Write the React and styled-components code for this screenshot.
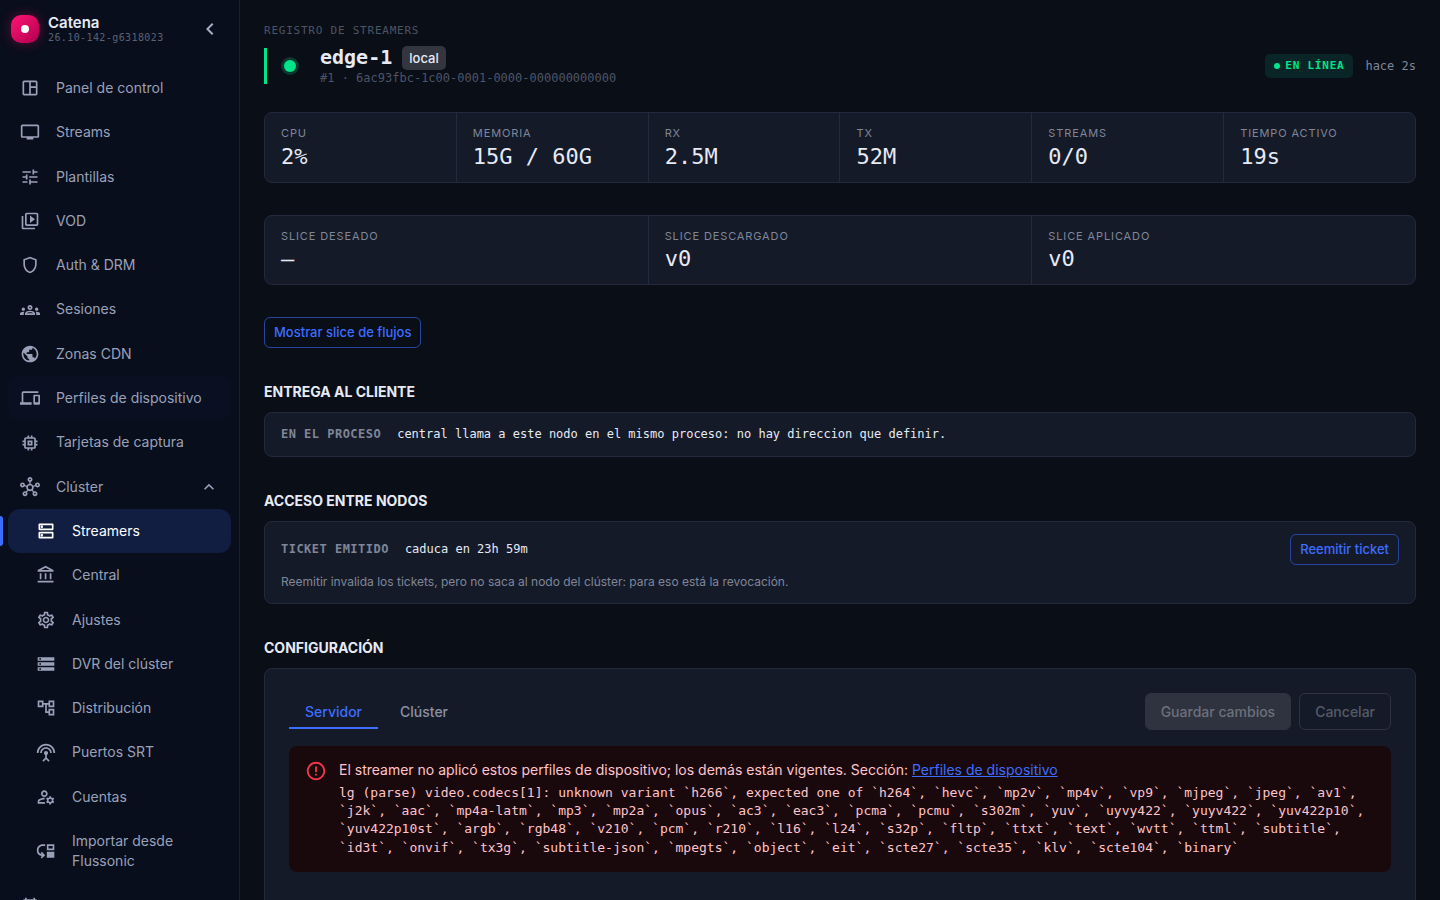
import { useState } from "react";
import styled, { createGlobalStyle, css } from "styled-components";
import {
    MdChevronLeft,
    MdErrorOutline,
    MdExpandLess,
    MdMemory,
    MdMoveDown,
    MdOutlineAccountBalance,
    MdOutlineAccountTree,
    MdOutlineCalendarMonth,
    MdOutlineDevices,
    MdOutlineDns,
    MdOutlineGroups,
    MdOutlineHub,
    MdOutlineManageAccounts,
    MdOutlineSettings,
    MdOutlineShield,
    MdOutlineSpaceDashboard,
    MdOutlineVideoLibrary,
    MdPublic,
    MdSettingsInputAntenna,
    MdStorage,
    MdTune,
    MdTv,
} from "react-icons/md";

const sans = `Inter, "Liberation Sans", sans-serif`;
const mono = `"DejaVu Sans Mono", "Liberation Mono", monospace`;

const mainLinks = [
    { label: "Panel de control", icon: MdOutlineSpaceDashboard },
    { label: "Streams", icon: MdTv },
    { label: "Plantillas", icon: MdTune },
    { label: "VOD", icon: MdOutlineVideoLibrary },
    { label: "Auth & DRM", icon: MdOutlineShield },
    { label: "Sesiones", icon: MdOutlineGroups },
    { label: "Zonas CDN", icon: MdPublic },
    { label: "Perfiles de dispositivo", icon: MdOutlineDevices, hovered: true },
    { label: "Tarjetas de captura", icon: MdMemory },
];

const clusterLinks = [
    { label: "Streamers", icon: MdOutlineDns, active: true },
    { label: "Central", icon: MdOutlineAccountBalance },
    { label: "Ajustes", icon: MdOutlineSettings },
    { label: "DVR del clúster", icon: MdStorage },
    { label: "Distribución", icon: MdOutlineAccountTree },
    { label: "Puertos SRT", icon: MdSettingsInputAntenna },
    { label: "Cuentas", icon: MdOutlineManageAccounts },
    { label: "Importar desde Flussonic", icon: MdMoveDown },
];

const metrics = [
    ["CPU", "2%"],
    ["Memoria", "15G / 60G"],
    ["RX", "2.5M"],
    ["TX", "52M"],
    ["Streams", "0/0"],
    ["Tiempo activo", "19s"],
];

const slices = [
    ["Slice deseado", "—"],
    ["Slice descargado", "v0"],
    ["Slice aplicado", "v0"],
];

const codecError =
    "lg (parse) video.codecs[1]: unknown variant `h266`, expected one of `h264`, `hevc`, `mp2v`, `mp4v`, `vp9`, `mjpeg`, `jpeg`, `av1`, `j2k`, `aac`, `mp4a-latm`, `mp3`, `mp2a`, `opus`, `ac3`, `eac3`, `pcma`, `pcmu`, `s302m`, `yuv`, `uyvy422`, `yuyv422`, `yuv422p10`, `yuv422p10st`, `argb`, `rgb48`, `v210`, `pcm`, `r210`, `l16`, `l24`, `s32p`, `fltp`, `ttxt`, `text`, `wvtt`, `ttml`, `subtitle`, `id3t`, `onvif`, `tx3g`, `subtitle-json`, `mpegts`, `object`, `eit`, `scte27`, `scte35`, `klv`, `scte104`, `binary`";

function NavItem({ label, icon: Icon, nested, active, hovered }) {
    return (
        <NavLink
            href="#"
            $nested={nested}
            $active={active}
            $hovered={hovered}
            aria-current={active ? "page" : undefined}
        >
            <Icon size={20} />
            <span>{label}</span>
        </NavLink>
    );
}

function StatStrip({ items }) {
    return (
        <Strip $columns={items.length}>
            {items.map(([label, value]) => (
                <Stat key={label}>
                    <StatLabel>{label}</StatLabel>
                    <StatValue>{value}</StatValue>
                </Stat>
            ))}
        </Strip>
    );
}

export default function App() {
    const [clusterOpen, setClusterOpen] = useState(true);
    const [tab, setTab] = useState("Servidor");

    return (
        <>
            <GlobalStyle />
            <Layout>
                <Sidebar>
                    <Brand>
                        <Logo />
                        <BrandText>
                            <BrandName>Catena</BrandName>
                            <Version>26.10-142-g6318023</Version>
                        </BrandText>
                        <IconButton aria-label="Contraer menú">
                            <MdChevronLeft size={24} />
                        </IconButton>
                    </Brand>
                    <Nav>
                        {mainLinks.map((link) => (
                            <NavItem key={link.label} {...link} />
                        ))}
                        <NavToggle
                            aria-expanded={clusterOpen}
                            onClick={() => setClusterOpen(!clusterOpen)}
                        >
                            <MdOutlineHub size={20} />
                            <span>Clúster</span>
                            <MdExpandLess size={20} />
                        </NavToggle>
                        {clusterOpen &&
                            clusterLinks.map((link) => (
                                <NavItem key={link.label} nested {...link} />
                            ))}
                        <NavItem
                            label="Próxima emisión"
                            icon={MdOutlineCalendarMonth}
                        />
                    </Nav>
                </Sidebar>

                <Main>
                    <Kicker>Registro de streamers</Kicker>
                    <Header>
                        <Accent />
                        <StatusDot />
                        <Identity>
                            <TitleRow>
                                <Title>edge-1</Title>
                                <Badge>local</Badge>
                            </TitleRow>
                            <NodeId>
                                #1 · 6ac93fbc-1c00-0001-0000-000000000000
                            </NodeId>
                        </Identity>
                        <OnlinePill>En línea</OnlinePill>
                        <LastSeen>hace 2s</LastSeen>
                    </Header>

                    <StatStrip items={metrics} />
                    <StatStrip items={slices} />

                    <OutlineButton>Mostrar slice de flujos</OutlineButton>

                    <Section>
                        <SectionTitle>Entrega al cliente</SectionTitle>
                        <Card>
                            <CardRow>
                                <State>En el proceso</State>
                                <Detail>
                                    central llama a este nodo en el mismo
                                    proceso: no hay direccion que definir.
                                </Detail>
                            </CardRow>
                        </Card>
                    </Section>

                    <Section>
                        <SectionTitle>Acceso entre nodos</SectionTitle>
                        <Card>
                            <CardRow>
                                <State>Ticket emitido</State>
                                <Detail>caduca en 23h 59m</Detail>
                                <OutlineButton>Reemitir ticket</OutlineButton>
                            </CardRow>
                            <Note>
                                Reemitir invalida los tickets, pero no saca al
                                nodo del clúster: para eso está la revocación.
                            </Note>
                        </Card>
                    </Section>

                    <Section>
                        <SectionTitle>Configuración</SectionTitle>
                        <Card $roomy>
                            <Toolbar>
                                <Tabs role="tablist">
                                    {["Servidor", "Clúster"].map((name) => (
                                        <Tab
                                            key={name}
                                            role="tab"
                                            aria-selected={tab === name}
                                            $active={tab === name}
                                            onClick={() => setTab(name)}
                                        >
                                            {name}
                                        </Tab>
                                    ))}
                                </Tabs>
                                <FormButton $filled disabled>
                                    Guardar cambios
                                </FormButton>
                                <FormButton disabled>Cancelar</FormButton>
                            </Toolbar>
                            <Alert role="alert">
                                <MdErrorOutline size={22} />
                                <div>
                                    <AlertText>
                                        El streamer no aplicó estos perfiles de
                                        dispositivo; los demás están vigentes.
                                        Sección:{" "}
                                        <a href="#">Perfiles de dispositivo</a>
                                    </AlertText>
                                    <AlertCode>{codecError}</AlertCode>
                                </div>
                            </Alert>
                        </Card>
                    </Section>
                </Main>
            </Layout>
        </>
    );
}

const GlobalStyle = createGlobalStyle`
    * {
        box-sizing: border-box;
    }
    body {
        margin: 0;
        background-color: #0a0e17;
        color: #e6eaf5;
        font-family: ${sans};
        font-size: 14px;
    }
    button {
        font-family: inherit;
        cursor: pointer;
    }
`;

const Layout = styled.div`
    display: flex;
    height: 100vh;
    overflow: hidden;
`;

const Sidebar = styled.aside`
    flex: 0 0 240px;
    overflow: hidden;
    background-color: #090e1c;
    border-right: 1px solid #1a2030;
`;
const Brand = styled.div`
    display: flex;
    align-items: center;
    height: 58px;
    padding: 0 17px 0 11px;
    margin-bottom: 8px;
`;
const Logo = styled.div`
    display: flex;
    align-items: center;
    justify-content: center;
    width: 28px;
    height: 28px;
    border-radius: 10px;
    background-image: linear-gradient(135deg, #ff1475, #b0004e);
    box-shadow: 0 0 12px rgba(255, 15, 110, 0.35);

    &::before {
        content: "";
        width: 8px;
        height: 8px;
        border-radius: 50%;
        background-color: #ffffff;
    }
`;
const BrandText = styled.div`
    flex: 1;
    display: flex;
    flex-direction: column;
    margin-left: 9px;
`;
const BrandName = styled.span`
    font-size: 15px;
    font-weight: 600;
    line-height: 18px;
`;
const Version = styled.span`
    font-family: ${mono};
    font-size: 10px;
    line-height: 12px;
    letter-spacing: 0.04em;
    color: #5b6275;
`;
const IconButton = styled.button`
    display: flex;
    padding: 0;
    border: none;
    background: none;
    color: #a6aec4;
`;

const Nav = styled.nav`
    display: flex;
    flex-direction: column;
    padding: 0 8px;
`;
const navRow = css`
    position: relative;
    display: flex;
    align-items: center;
    gap: 16px;
    padding: 12px;
    border: none;
    border-radius: 12px;
    background: none;
    color: #99a1b9;
    font-size: 14px;
    line-height: 1.45;
    text-align: left;
    text-decoration: none;

    svg {
        flex-shrink: 0;
    }
`;
const NavLink = styled.a`
    ${navRow}
    padding-left: ${(props) => (props.$nested ? 28 : 12)}px;
    background-color: ${(props) => (props.$hovered ? "#0a1022" : "transparent")};
    ${(props) =>
        props.$active &&
        css`
            background-color: #111e42;
            color: #ffffff;

            &::before {
                content: "";
                position: absolute;
                left: -8px;
                top: 7px;
                bottom: 7px;
                width: 3px;
                border-radius: 0 3px 3px 0;
                background-color: #3d6dff;
            }
        `}
`;
const NavToggle = styled.button`
    ${navRow}

    span {
        flex: 1;
    }
`;

const Main = styled.main`
    flex: 1;
    min-width: 0;
    padding: 24px;
    overflow-y: auto;
    scrollbar-width: none;
`;
const Kicker = styled.div`
    margin-bottom: 8px;
    font-family: ${mono};
    font-size: 11px;
    line-height: 14px;
    letter-spacing: 0.07em;
    text-transform: uppercase;
    color: #4d5466;
`;
const Header = styled.header`
    display: flex;
    align-items: center;
    margin-bottom: 26px;
`;
const Accent = styled.div`
    width: 3px;
    height: 36px;
    background-color: #00e58a;
`;
const StatusDot = styled.div`
    width: 12px;
    height: 12px;
    margin: 0 24px 0 17px;
    border-radius: 50%;
    background-color: #00e58a;
    box-shadow: 0 0 0 3px rgba(0, 229, 138, 0.2);
`;
const Identity = styled.div`
    flex: 1;
`;
const TitleRow = styled.div`
    display: flex;
    align-items: flex-start;
    gap: 10px;
`;
const Title = styled.h1`
    margin: 0;
    font-family: ${mono};
    font-size: 20px;
    font-weight: 700;
    line-height: 22px;
`;
const Badge = styled.span`
    padding: 0 7px;
    border-radius: 5px;
    background-color: #33353f;
    font-size: 13px;
    font-weight: 500;
    line-height: 24px;
`;
const NodeId = styled.div`
    font-family: ${mono};
    font-size: 12px;
    line-height: 16px;
    color: #4d5466;
`;
const OnlinePill = styled.span`
    display: flex;
    align-items: center;
    gap: 5px;
    padding: 0 9px;
    border-radius: 5px;
    background-color: #0a2528;
    color: #00e58a;
    font-family: ${mono};
    font-size: 11px;
    font-weight: 700;
    line-height: 24px;
    letter-spacing: 0.07em;
    text-transform: uppercase;

    &::before {
        content: "";
        width: 6px;
        height: 6px;
        border-radius: 50%;
        background-color: currentColor;
    }
`;
const LastSeen = styled.span`
    margin-left: 12px;
    font-family: ${mono};
    font-size: 12px;
    color: #7f8698;
`;

const Strip = styled.section`
    display: grid;
    grid-template-columns: repeat(${(props) => props.$columns}, 1fr);
    gap: 1px;
    margin-bottom: 32px;
    overflow: hidden;
    border: 1px solid #232a3d;
    border-radius: 8px;
    background-color: #232a3d;
`;
const Stat = styled.div`
    padding: 12px 16px;
    background-color: #151a29;
`;
const StatLabel = styled.div`
    margin-bottom: 2px;
    font-size: 11px;
    line-height: 1.5;
    letter-spacing: 0.08em;
    text-transform: uppercase;
    color: #7f8698;
`;
const StatValue = styled.div`
    font-family: ${mono};
    font-size: 22px;
    line-height: 26px;
`;

const OutlineButton = styled.button`
    height: 31px;
    padding: 0 9px 1px;
    border: 1px solid #2745a0;
    border-radius: 6px;
    background: none;
    color: #3d6dff;
    font-size: 13px;
    font-weight: 500;
`;

const Section = styled.section`
    margin-top: 32px;
`;
const SectionTitle = styled.h2`
    margin: 0 0 8px;
    font-size: 14px;
    font-weight: 700;
    line-height: 24px;
    text-transform: uppercase;
`;
const Card = styled.div`
    padding: ${(props) => (props.$roomy ? "24px 24px 48px" : "12px 16px")};
    border: 1px solid #232a3d;
    border-radius: 8px;
    background-color: #151a29;
`;
const CardRow = styled.div`
    display: flex;
    align-items: center;
    gap: 16px;

    button {
        margin-left: auto;
    }
`;
const State = styled.span`
    font-family: ${mono};
    font-size: 12px;
    font-weight: 700;
    line-height: 19px;
    letter-spacing: 0.04em;
    text-transform: uppercase;
    color: #7f8698;
`;
const Detail = styled.span`
    font-family: ${mono};
    font-size: 12px;
    line-height: 19px;
`;
const Note = styled.p`
    margin: 8px 0 0;
    font-size: 12px;
    line-height: 18px;
    color: #7f8698;
`;

const Toolbar = styled.div`
    display: flex;
    align-items: flex-start;
    gap: 8px;
    margin-bottom: 16px;
`;
const Tabs = styled.div`
    flex: 1;
    display: flex;
    gap: 6px;
`;
const Tab = styled.button`
    height: 36px;
    padding: 2px 16px 0;
    border: none;
    border-bottom: 2px solid
        ${(props) => (props.$active ? "#3d6dff" : "transparent")};
    background: none;
    color: ${(props) => (props.$active ? "#3d6dff" : "#8a91a5")};
    font-size: 14px;
    font-weight: 500;
`;
const FormButton = styled.button`
    height: 37px;
    padding: 0 15px 1px;
    border: 1px solid #2f333f;
    border-radius: 6px;
    background-color: ${(props) => (props.$filled ? "#2f333f" : "transparent")};
    color: ${(props) => (props.$filled ? "#6c707b" : "#555a66")};
    font-size: 14px;
    font-weight: 500;
`;
const Alert = styled.div`
    display: flex;
    gap: 12px;
    padding: 14px 16px 15px;
    border-radius: 8px;
    background-color: #1a090c;
    color: #ffc4cb;

    svg {
        flex-shrink: 0;
        color: #f4364c;
    }
`;
const AlertText = styled.p`
    margin: 0 0 4px;
    font-size: 14px;
    line-height: 20px;

    a {
        color: #3d6dff;
    }
`;
const AlertCode = styled.code`
    display: block;
    font-family: ${mono};
    font-size: 13px;
    line-height: 1.4;
`;
